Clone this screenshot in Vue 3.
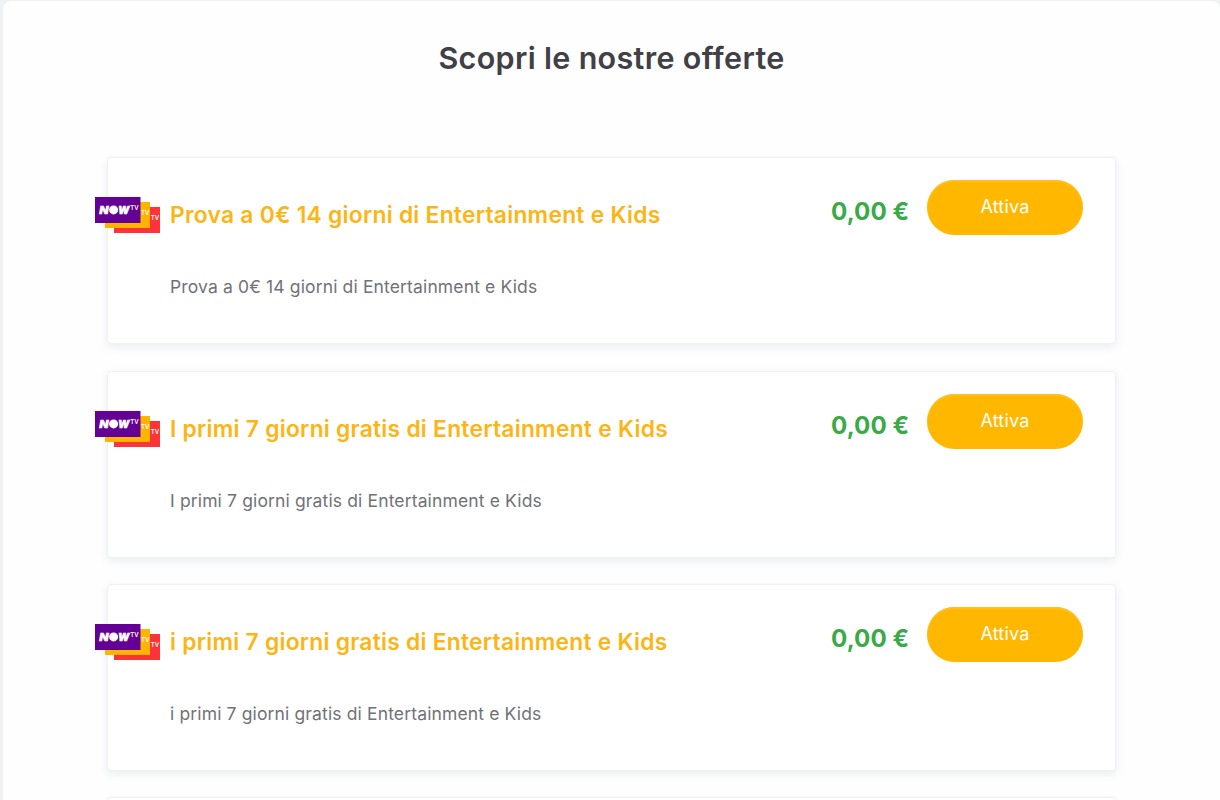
<template>
  <main class="page">
    <h1 class="heading">Scopri le nostre offerte</h1>
    <section class="offers">
      <article v-for="offer in offers" :key="offer.id" class="card">
        <svg class="logo" viewBox="0 0 65 37" role="img" aria-label="NOW TV">
          <rect x="19" y="10" width="46" height="26" fill="#ff3338" />
          <rect x="10" y="5" width="45" height="26" fill="#ffb400" />
          <rect width="45.5" height="26" fill="#650095" />
          <text class="now" x="4.2" y="16.6" textLength="9.3" lengthAdjust="spacingAndGlyphs">N</text>
          <circle cx="18.6" cy="12.9" r="4.5" fill="#fff" />
          <text class="now" x="23" y="16.6" textLength="11.4" lengthAdjust="spacingAndGlyphs">W</text>
          <text class="tv" x="35.2" y="12.8">TV</text>
          <text class="tv" x="46.1" y="17.9">TV</text>
          <text class="tv" x="55.7" y="22.9">TV</text>
        </svg>
        <div class="info">
          <h2 class="title">{{ offer.title }}</h2>
          <p class="description">{{ offer.title }}</p>
        </div>
        <strong class="price">{{ offer.price }}</strong>
        <button class="activate" type="button">Attiva</button>
      </article>
      <article class="card"></article>
    </section>
  </main>
</template>

<script setup>
const offers = [
  { id: 1, title: 'Prova a 0€ 14 giorni di Entertainment e Kids', price: '0,00 €' },
  { id: 2, title: 'I primi 7 giorni gratis di Entertainment e Kids', price: '0,00 €' },
  { id: 3, title: 'i primi 7 giorni gratis di Entertainment e Kids', price: '0,00 €' },
]
</script>

<style>
body {
  background: #f0f1f2;
  overflow: hidden;
}
</style>

<style scoped>
.page {
  box-sizing: border-box;
  height: 799px;
  margin: 1px 0 0 3px;
  padding: 36px 104px 0;
  overflow: hidden;
  border-radius: 8px 8px 0 0;
  background: #fefefe;
  font-family: Inter, sans-serif;
}

.heading {
  margin: 0;
  color: #414047;
  font-size: 30.5px;
  font-weight: 600;
  line-height: 42px;
  letter-spacing: 0.32px;
  text-align: center;
}

.offers {
  display: flex;
  flex-direction: column;
  gap: 26.4px;
  margin-top: 78.15px;
}

.card {
  box-sizing: border-box;
  display: flex;
  flex: none;
  align-items: flex-start;
  height: 187px;
  padding-right: 32px;
  border: 1px solid #eef0f3;
  border-radius: 4px;
  background: #fff;
  box-shadow: 0 3px 8px rgba(60, 80, 110, 0.1);
}

.logo {
  flex: none;
  width: 65px;
  height: 37px;
  margin: 39px 0 0 -13px;
}

.now {
  fill: #fff;
  stroke: #fff;
  stroke-width: 0.4px;
  font-family: Inter, sans-serif;
  font-size: 10.2px;
  font-style: italic;
  font-weight: 900;
}

.tv {
  fill: #fff;
  font-family: Inter, sans-serif;
  font-size: 6px;
  font-weight: 600;
}

.info {
  flex: 1;
  padding: 41px 0 0 10px;
  white-space: nowrap;
}

.title {
  margin: 0;
  color: #fcb515;
  font-size: 22.8px;
  font-weight: 600;
  line-height: 32px;
  letter-spacing: 0.26px;
}

.description {
  margin: 44px 0 0;
  color: #707279;
  font-size: 17.5px;
  line-height: 24px;
  letter-spacing: 0.14px;
}

.price {
  margin: 36px 18px 0 0;
  color: #39aa48;
  font-size: 24.2px;
  font-weight: 700;
  line-height: 36px;
}

.activate {
  width: 156px;
  height: 55px;
  margin: 22px 0 0;
  padding: 0 0 2px;
  border: 0;
  border-radius: 28px;
  background: #ffb700;
  box-shadow: inset 0 2px 1px #ffc022;
  color: #fff;
  font: 18px Inter, sans-serif;
  letter-spacing: 0.2px;
}
</style>
